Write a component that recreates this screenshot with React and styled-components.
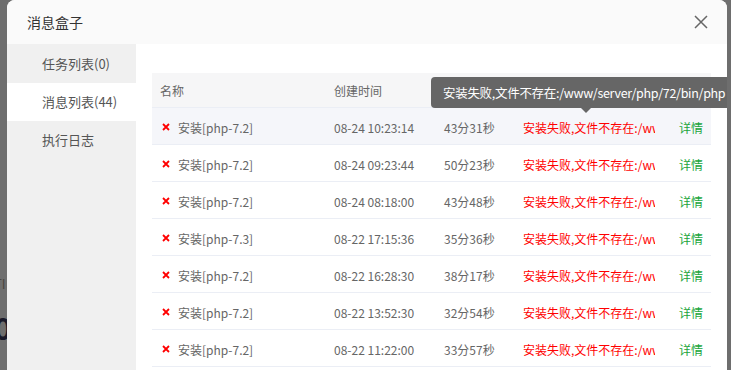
import styled, { createGlobalStyle } from 'styled-components';

const GlobalStyle = createGlobalStyle`
    html, body {
        margin: 0;
        padding: 0;
        overflow: hidden;
        background: #6e6e6e;
    }
    * {
        box-sizing: border-box;
    }
`;

const rows = [
    { name: '安装[php-7.2]', time: '08-24 10:23:14', cost: '43分31秒', hover: true },
    { name: '安装[php-7.2]', time: '08-24 09:23:44', cost: '50分23秒' },
    { name: '安装[php-7.2]', time: '08-24 08:18:00', cost: '43分48秒' },
    { name: '安装[php-7.3]', time: '08-22 17:15:36', cost: '35分36秒' },
    { name: '安装[php-7.2]', time: '08-22 16:28:30', cost: '38分17秒' },
    { name: '安装[php-7.2]', time: '08-22 13:52:30', cost: '32分54秒' },
    { name: '安装[php-7.2]', time: '08-22 11:22:00', cost: '33分57秒' },
    { name: '安装[php-7.2]', time: '08-22 10:05:12', cost: '31分08秒' },
];

const tabs = [
    { label: '任务列表(0)' },
    { label: '消息列表(44)', active: true },
    { label: '执行日志' },
];

const message = '安装失败,文件不存在:/www/server/php/72/bin/php';

const FailIcon = () => (
    <svg width="8" height="8" viewBox="0 0 8 8">
        <path d="M1 1L7 7M7 1L1 7" stroke="#f00" strokeWidth="1.8" />
    </svg>
);

const CloseIcon = () => (
    <svg width="14" height="14" viewBox="0 0 14 14">
        <path d="M1 1L13 13M13 1L1 13" stroke="#666" strokeWidth="1.5" />
    </svg>
);

const App = () => (
    <Page>
        <GlobalStyle />
        <Behind>
            <span className="behind__small">TI</span>
            <span className="behind__big">0</span>
        </Behind>
        <Dialog>
            <Header>
                <Title>消息盒子</Title>
                <CloseButton>
                    <CloseIcon />
                </CloseButton>
            </Header>
            <Body>
                <Sidebar>
                    {tabs.map((t) => (
                        <Tab key={t.label} $active={t.active}>
                            {t.label}
                        </Tab>
                    ))}
                </Sidebar>
                <Content>
                    <Table>
                        <HeadRow>
                            <Cell $w={174}>名称</Cell>
                            <Cell $w={110}>创建时间</Cell>
                            <Cell $w={79}>耗时</Cell>
                            <Cell $w={156}>执行结果</Cell>
                            <Cell $w={40} $last>操作</Cell>
                        </HeadRow>
                        {rows.map((r, i) => (
                            <Row key={i} $hover={r.hover}>
                                <Cell $w={174}>
                                    <NameWrap>
                                        <FailIcon />
                                        <span>{r.name}</span>
                                    </NameWrap>
                                </Cell>
                                <Cell $w={110}>{r.time}</Cell>
                                <Cell $w={79}>{r.cost}</Cell>
                                <Cell $w={156} $color="#f00">
                                    <Clip>{message}</Clip>
                                </Cell>
                                <Cell $w={40} $last $color="#20a53a">详情</Cell>
                            </Row>
                        ))}
                    </Table>
                    <Tooltip>{message}</Tooltip>
                </Content>
            </Body>
        </Dialog>
    </Page>
);

export default App;

const Page = styled.div`
    position: relative;
    width: 731px;
    height: 370px;
    padding-left: 7px;
    font-family: "Microsoft YaHei", "Noto Sans CJK SC", sans-serif;
`;

const Behind = styled.div`
    position: absolute;
    left: -6px;
    top: 274px;
    display: flex;
    flex-direction: column;
    .behind__small {
        font-size: 13px;
        color: #4a4540;
    }
    .behind__big {
        margin-top: 12px;
        font-size: 30px;
        font-weight: 700;
        color: #1a1a2a;
    }
`;

const Dialog = styled.div`
    position: relative;
    width: 720px;
    height: 420px;
    background: #fff;
    border-radius: 8px 8px 0 0;
    overflow: hidden;
    display: flex;
    flex-direction: column;
`;

const Header = styled.div`
    height: 44px;
    flex: none;
    background: #fafafa;
    display: flex;
    align-items: center;
    justify-content: space-between;
    padding: 0 19px 0 20px;
`;

const Title = styled.div`
    font-size: 14px;
    color: #333;
`;

const CloseButton = styled.div`
    display: flex;
    align-items: center;
`;

const Body = styled.div`
    flex: 1;
    display: flex;
`;

const Sidebar = styled.div`
    width: 129px;
    flex: none;
    background: #f0f0f0;
    display: flex;
    flex-direction: column;
    padding-top: 1px;
`;

const Tab = styled.div`
    height: 38px;
    line-height: 38px;
    padding-left: 35px;
    font-size: 13px;
    color: #555;
    background: ${(p) => (p.$active ? '#fff' : 'transparent')};
`;

const Content = styled.div`
    position: relative;
    flex: 1;
    padding: 29px 16px 0 16px;
`;

const Table = styled.div`
    display: flex;
    flex-direction: column;
`;

const HeadRow = styled.div`
    display: flex;
    height: 35px;
    align-items: center;
    background: #f6f6f7;
    border-bottom: 1px solid #ebeef5;
    color: #666;
    font-size: 12px;
`;

const Row = styled.div`
    display: flex;
    height: 37px;
    padding-top: 3px;
    align-items: center;
    border-bottom: 1px solid #ebeef5;
    background: ${(p) => (p.$hover ? '#f5f6fa' : '#fff')};
    color: #666;
    font-size: 12px;
`;

const Cell = styled.div`
    width: ${(p) => p.$w}px;
    flex: none;
    padding: ${(p) => (p.$last ? '0 0 0 8px' : '0 8px')};
    color: ${(p) => p.$color || 'inherit'};
    white-space: nowrap;
`;

const NameWrap = styled.div`
    display: flex;
    align-items: center;
    gap: 8px;
    padding-left: 2px;
    svg {
        margin-top: -2px;
    }
`;

const Clip = styled.div`
    overflow: hidden;
    white-space: nowrap;
    width: 132px;
`;

const Tooltip = styled.div`
    position: absolute;
    left: 295px;
    top: 33px;
    height: 31px;
    line-height: 31px;
    padding: 0 12px;
    background: #666;
    color: #fff;
    font-size: 12.5px;
    letter-spacing: -0.3px;
    border-radius: 4px;
    white-space: nowrap;
    &::after {
        content: '';
        position: absolute;
        left: 150px;
        bottom: -5px;
        border-left: 5px solid transparent;
        border-right: 5px solid transparent;
        border-top: 5px solid #666;
    }
`;
